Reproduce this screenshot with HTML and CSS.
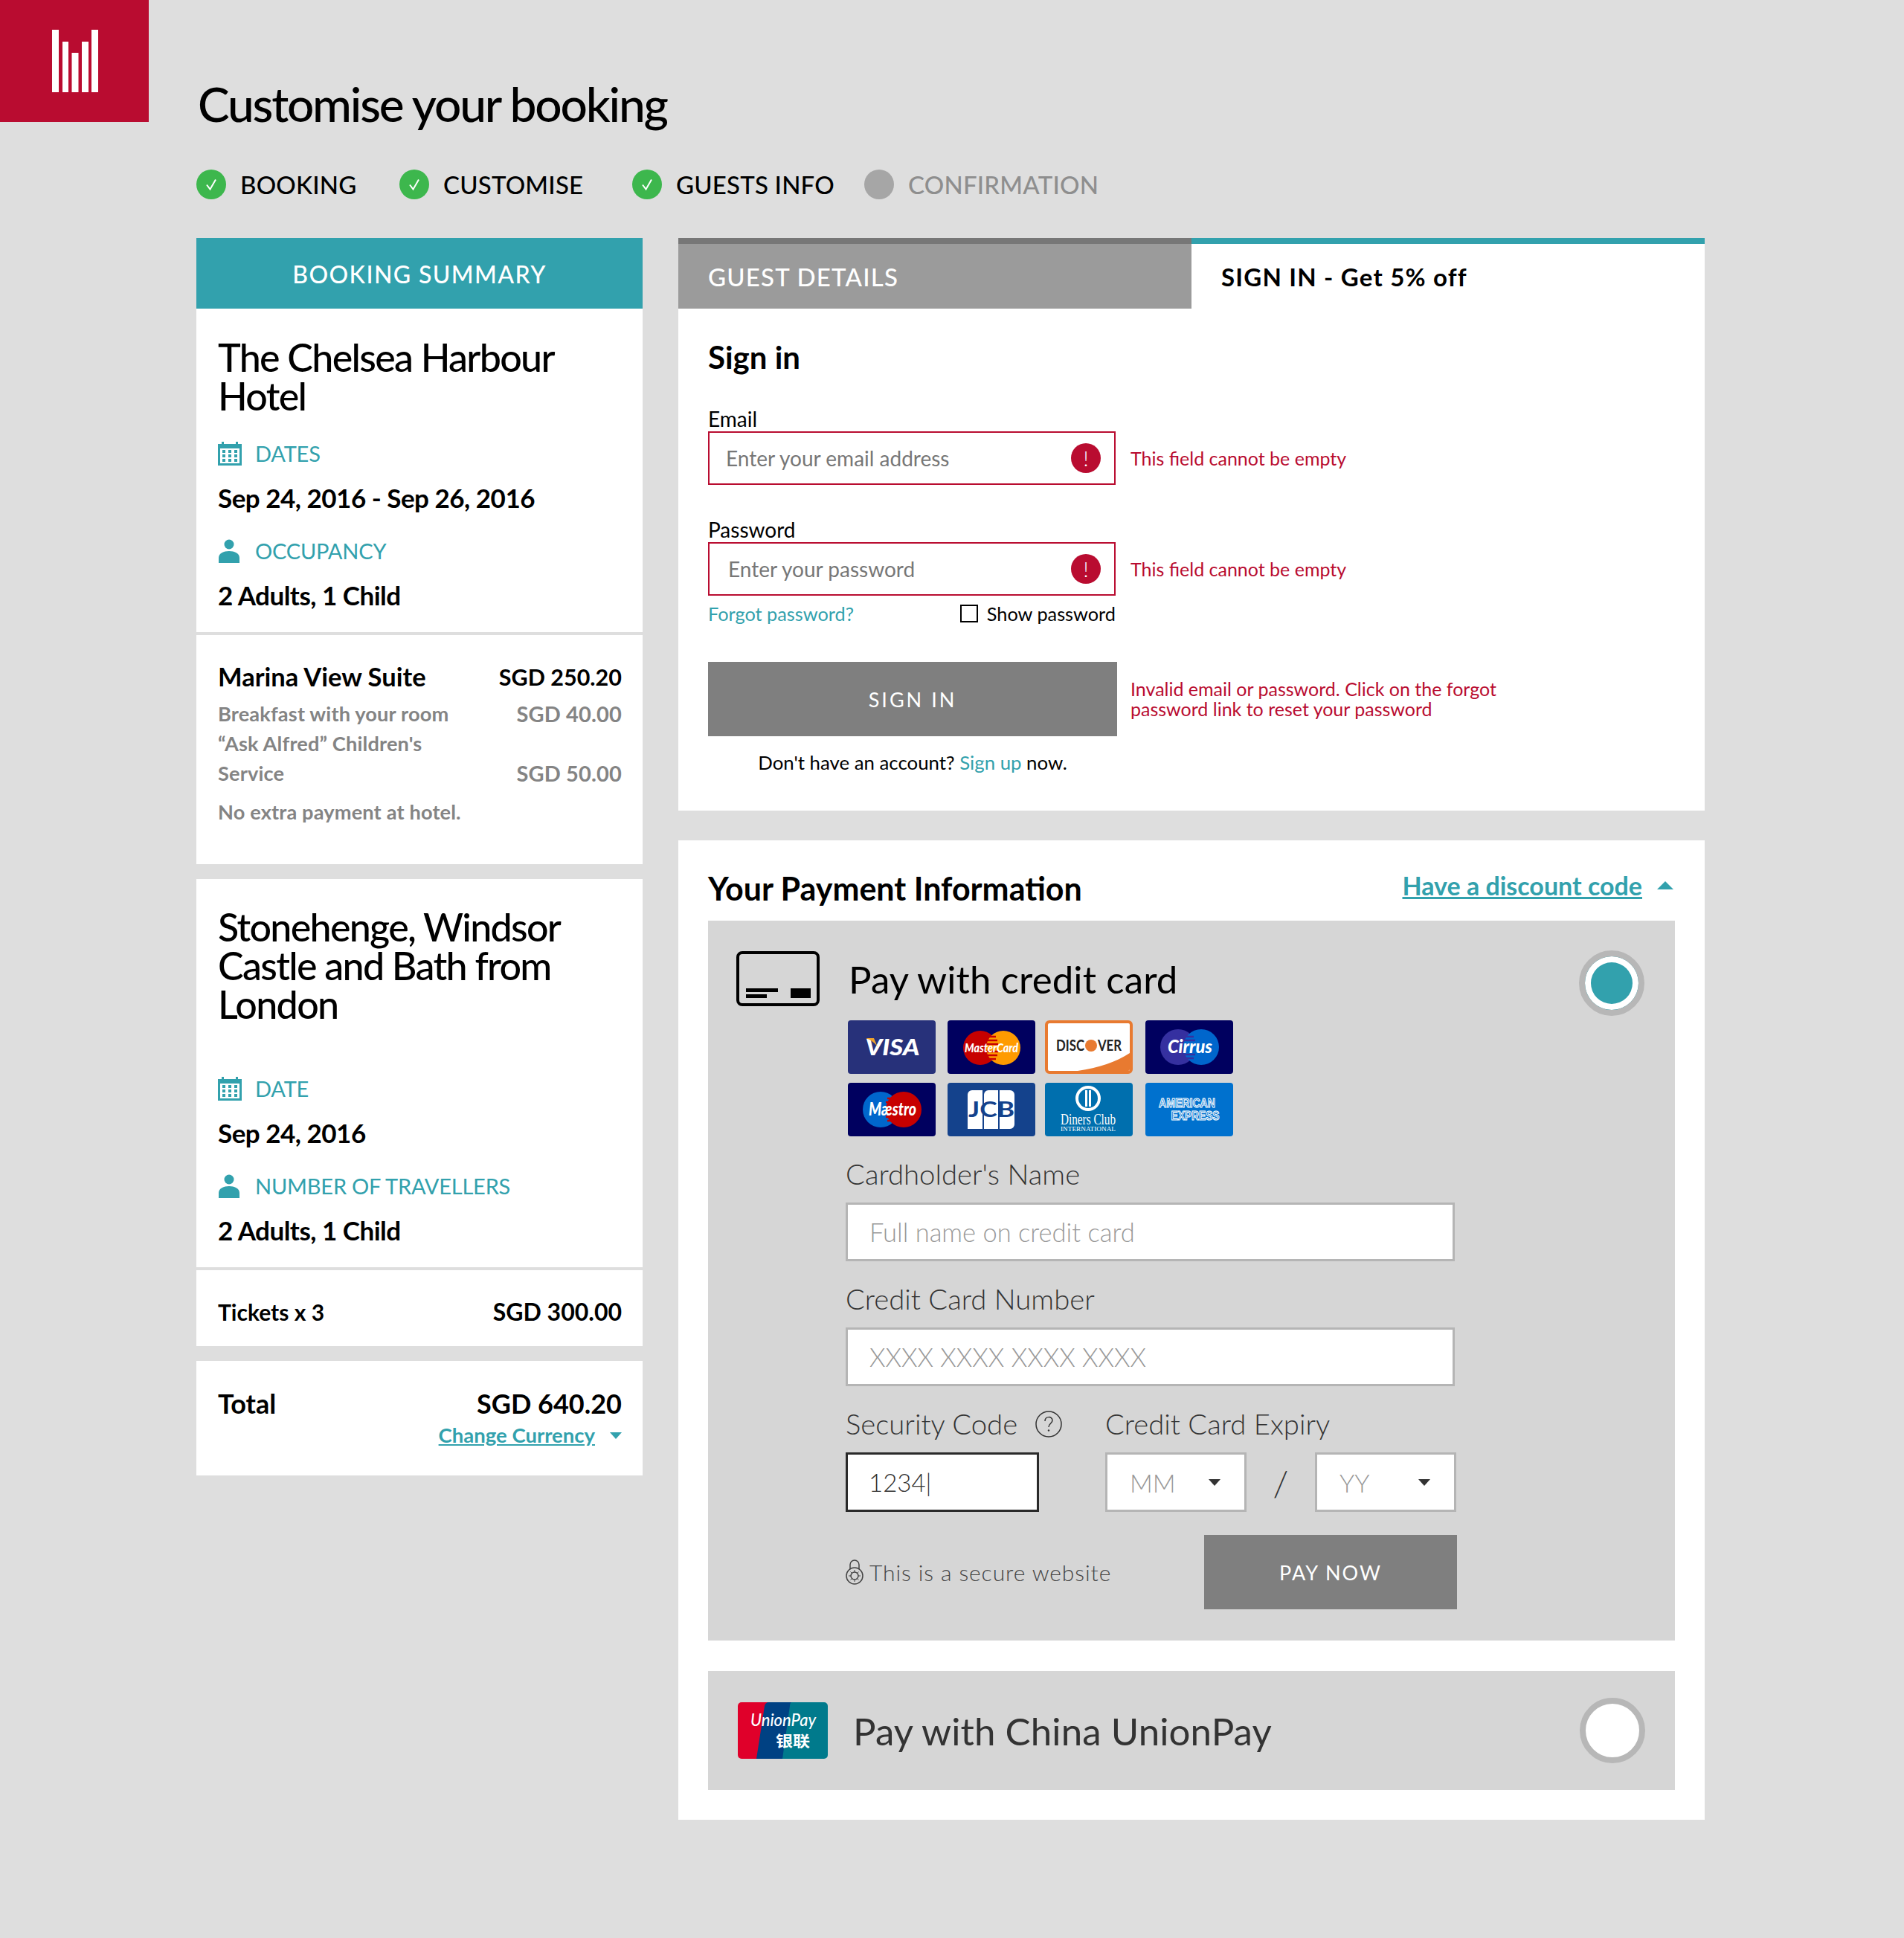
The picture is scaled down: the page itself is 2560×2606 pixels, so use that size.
FILE: index.html
```html
<!DOCTYPE html>
<html lang="en">
<head>
    <meta charset="UTF-8">
    <meta name="viewport" content="width=device-width, initial-scale=1.0">
    <title>Customise your booking</title>
    <link rel="stylesheet" href="styles.css">
</head>
<body>
    <header class="top">
        <div class="logo">
            <svg width="62" height="84" viewBox="0 0 62 84">
                <rect x="0" y="0" width="9" height="84" fill="#fff"/>
                <rect x="14" y="16" width="8" height="68" fill="#fff"/>
                <rect x="26.500" y="31" width="9" height="53" fill="#fff"/>
                <rect x="40" y="16" width="9" height="68" fill="#fff"/>
                <rect x="53" y="0" width="9" height="84" fill="#fff"/>
            </svg>
        </div>
        <h1>Customise your booking</h1>
    </header>

    <ul class="steps">
        <li class="step step-1"><span class="tick"><svg width="40" height="40" viewBox="0 0 40 40"><path d="M14 20.500l4.500 6L26 13.500" fill="none" stroke="#fff" stroke-width="2"/></svg></span>BOOKING</li>
        <li class="step step-2"><span class="tick"><svg width="40" height="40" viewBox="0 0 40 40"><path d="M14 20.500l4.500 6L26 13.500" fill="none" stroke="#fff" stroke-width="2"/></svg></span>CUSTOMISE</li>
        <li class="step step-3"><span class="tick"><svg width="40" height="40" viewBox="0 0 40 40"><path d="M14 20.500l4.500 6L26 13.500" fill="none" stroke="#fff" stroke-width="2"/></svg></span>GUESTS INFO</li>
        <li class="step step-off"><span class="tick"></span>CONFIRMATION</li>
    </ul>

    <main class="columns">
        <aside class="summary">
            <div class="summary-head">BOOKING SUMMARY</div>

            <section class="block block-info">
                <h2>The Chelsea Harbour Hotel</h2>
                <div class="meta meta-first">
                    <svg class="meta-icon" width="32" height="32" viewBox="0 0 32 32"><path d="M0 3h5V0h3v3h16V0h3v3h5v29H0zM3 9v20h26V9z" fill="#32a1ad"/><path d="M6 11h4v4H6zM14 11h4v4h-4zM22 11h4v4h-4zM6 17h4v4H6zM14 17h4v4h-4zM22 17h4v4h-4zM6 23h4v4H6zM14 23h4v4h-4zM22 23h4v4h-4z" fill="#32a1ad"/></svg>
                    DATES
                </div>
                <p class="value">Sep 24, 2016 - Sep 26, 2016</p>
                <div class="meta">
                    <svg class="meta-icon" width="32" height="32" viewBox="0 0 32 32"><circle cx="15" cy="7" r="6.500" fill="#32a1ad"/><path d="M1 32v-7c0-6 7-9 14-9s14 3 14 9v7z" fill="#32a1ad"/></svg>
                    OCCUPANCY
                </div>
                <p class="value">2 Adults, 1 Child</p>
            </section>

            <section class="block block-prices">
                <div class="price-row price-main"><span>Marina View Suite</span><span class="amount">SGD 250.20</span></div>
                <div class="price-row price-extra"><span>Breakfast with your room</span><span class="amount">SGD 40.00</span></div>
                <div class="price-row price-extra"><span class="price-wrap">“Ask Alfred” Children's Service</span><span class="amount">SGD 50.00</span></div>
                <p class="price-note">No extra payment at hotel.</p>
            </section>

            <section class="block block-tour">
                <h2>Stonehenge, Windsor Castle and Bath from London</h2>
                <div class="meta meta-tour">
                    <svg class="meta-icon" width="32" height="32" viewBox="0 0 32 32"><path d="M0 3h5V0h3v3h16V0h3v3h5v29H0zM3 9v20h26V9z" fill="#32a1ad"/><path d="M6 11h4v4H6zM14 11h4v4h-4zM22 11h4v4h-4zM6 17h4v4H6zM14 17h4v4h-4zM22 17h4v4h-4zM6 23h4v4H6zM14 23h4v4h-4zM22 23h4v4h-4z" fill="#32a1ad"/></svg>
                    DATE
                </div>
                <p class="value">Sep 24, 2016</p>
                <div class="meta">
                    <svg class="meta-icon" width="32" height="32" viewBox="0 0 32 32"><circle cx="15" cy="7" r="6.500" fill="#32a1ad"/><path d="M1 32v-7c0-6 7-9 14-9s14 3 14 9v7z" fill="#32a1ad"/></svg>
                    NUMBER OF TRAVELLERS
                </div>
                <p class="value">2 Adults, 1 Child</p>
            </section>

            <section class="block block-tickets">
                <div class="price-row price-tickets"><span>Tickets x 3</span><span class="amount">SGD 300.00</span></div>
            </section>

            <section class="block block-total">
                <div class="price-row price-total"><span>Total</span><span class="amount">SGD 640.20</span></div>
                <div class="currency"><a href="#">Change Currency</a><i class="caret caret-teal"></i></div>
            </section>
        </aside>

        <div class="content">
            <section class="signin-card">
                <div class="tabs">
                    <div class="tab tab-off">GUEST DETAILS</div>
                    <div class="tab tab-on">SIGN IN - Get 5% off</div>
                </div>
                <div class="signin-body">
                    <h3>Sign in</h3>
                    <label class="signin-label" for="email">Email</label>
                    <div class="signin-row">
                        <div class="bad-input">
                            <input id="email" type="text" placeholder="Enter your email address">
                            <span class="bang">!</span>
                        </div>
                        <span class="error">This field cannot be empty</span>
                    </div>
                    <label class="signin-label label-gap" for="password">Password</label>
                    <div class="signin-row">
                        <div class="bad-input">
                            <input id="password" class="input-pass" type="text" placeholder="Enter your password">
                            <span class="bang">!</span>
                        </div>
                        <span class="error">This field cannot be empty</span>
                    </div>
                    <div class="pass-tools">
                        <a href="#">Forgot password?</a>
                        <span class="show-pass"><i class="check"></i>Show password</span>
                    </div>
                    <div class="signin-row signin-submit">
                        <button type="button" class="btn btn-signin">SIGN IN</button>
                        <span class="error error-long">Invalid email or password. Click on the forgot password link to reset your password</span>
                    </div>
                    <p class="signup">Don't have an account? <a href="#">Sign up</a> now.</p>
                </div>
            </section>

            <section class="pay-card">
                <div class="pay-head">
                    <h3>Your Payment Information</h3>
                    <div class="discount"><a href="#">Have a discount code</a><i class="caret-up"></i></div>
                </div>

                <div class="panel panel-card">
                    <div class="panel-top">
                        <svg class="card-icon" width="112" height="74" viewBox="0 0 112 74">
                            <rect x="2" y="2" width="108" height="70" rx="6" fill="none" stroke="#000" stroke-width="4"/>
                            <path d="M13 50h43v5H13zM13 58h28v5H13zM73 50h27v13H73z" fill="#000"/>
                        </svg>
                        <h4>Pay with credit card</h4>
                        <span class="radio radio-on"></span>
                    </div>

                    <div class="pay-form">
                        <div class="brands">
                            <svg class="brand" viewBox="0 0 118 72"><rect width="118" height="72" rx="4" fill="#27317a"/><text class="brand-bold" x="60" y="47" font-size="31" text-anchor="middle" textLength="73" lengthAdjust="spacingAndGlyphs" fill="#fff">VISA</text><path d="M24 24h11l5 12c-3-5-9-10-16-12z" fill="#f0a32a"/></svg>
                            <svg class="brand" viewBox="0 0 118 72"><rect width="118" height="72" rx="4" fill="#00005f"/><circle cx="44" cy="37" r="23" fill="#c70000"/><circle cx="75" cy="37" r="23" fill="#ff9b00"/><path d="M54 22h11M52 27h15M51 32h17M51 42h17M52 47h15M54 52h11" stroke="#c70000" stroke-width="2.500"/><text class="brand-bold" x="59" y="43" font-size="17" text-anchor="middle" textLength="72" lengthAdjust="spacingAndGlyphs" fill="#fff">MasterCard</text></svg>
                            <svg class="brand" viewBox="0 0 118 72"><rect x="2" y="2" width="114" height="68" rx="4" fill="#fff" stroke="#e87a30" stroke-width="4"/><path d="M114 44v22a2 2 0 0 1-2 2H44c28-4 52-12 70-24z" fill="#e87a30"/><text class="brand-sans" x="15" y="41" font-size="20" textLength="38" lengthAdjust="spacingAndGlyphs" fill="#222">DISC</text><circle cx="62" cy="34" r="8" fill="#e87a30"/><text class="brand-sans" x="71" y="41" font-size="20" textLength="32" lengthAdjust="spacingAndGlyphs" fill="#222">VER</text></svg>
                            <svg class="brand" viewBox="0 0 118 72"><rect width="118" height="72" rx="4" fill="#00005f"/><circle cx="44" cy="36" r="24" fill="#3530a0"/><circle cx="75" cy="36" r="24" fill="#0066cc"/><path d="M53 22h12M51 27h16M51 46h16M53 51h12" stroke="#3530a0" stroke-width="2.500"/><text class="brand-bold" x="60" y="44" font-size="24" text-anchor="middle" textLength="60" lengthAdjust="spacingAndGlyphs" fill="#fff">Cirrus</text></svg>
                            <svg class="brand" viewBox="0 0 118 72"><rect width="118" height="72" rx="4" fill="#00005f"/><circle cx="44" cy="36" r="24" fill="#0066cc"/><circle cx="75" cy="36" r="24" fill="#c70000"/><path d="M53 21h13M51 26h17M51 46h17M53 51h13" stroke="#c70000" stroke-width="2.500"/><text class="brand-bold" x="60" y="44" font-size="24" text-anchor="middle" textLength="64" lengthAdjust="spacingAndGlyphs" fill="#fff">Mæstro</text></svg>
                            <svg class="brand" viewBox="0 0 118 72"><rect width="118" height="72" rx="4" fill="#14428c"/><path d="M27 16a6 6 0 0 1 6-6h14v52H27zM49 16a6 6 0 0 1 6-6h13v52H49zM70 10h14a6 6 0 0 1 6 6v40a6 6 0 0 1-6 6H70z" fill="#fff"/><text class="brand-sans" x="59" y="46" font-size="29" text-anchor="middle" textLength="62" lengthAdjust="spacingAndGlyphs" fill="#14428c">JCB</text></svg>
                            <svg class="brand" viewBox="0 0 118 72"><rect width="118" height="72" rx="4" fill="#006fae"/><circle cx="58" cy="21" r="17" fill="#fff"/><circle cx="58" cy="21" r="13" fill="#006fae"/><path d="M54 10h3v22h-3zM59 10h3v22h-3z" fill="#fff"/><text class="brand-serif" x="58" y="56" font-size="20" text-anchor="middle" textLength="74" lengthAdjust="spacingAndGlyphs" fill="#fff">Diners Club</text><text class="brand-serif" x="58" y="65" font-size="9" text-anchor="middle" textLength="74" lengthAdjust="spacingAndGlyphs" fill="#fff">INTERNATIONAL</text></svg>
                            <svg class="brand" viewBox="0 0 118 72"><rect width="118" height="72" rx="4" fill="#0071ce"/><text class="brand-amex" x="56" y="33" font-size="16.500" text-anchor="middle" textLength="76" lengthAdjust="spacingAndGlyphs">AMERICAN</text><text class="brand-amex" x="67" y="50" font-size="16.500" text-anchor="middle" textLength="65" lengthAdjust="spacingAndGlyphs">EXPRESS</text></svg>
                        </div>

                        <label class="pay-label" for="cardname">Cardholder's Name</label>
                        <input id="cardname" class="pay-input" type="text" placeholder="Full name on credit card">
                        <label class="pay-label" for="cardnum">Credit Card Number</label>
                        <input id="cardnum" class="pay-input" type="text" placeholder="XXXX XXXX XXXX XXXX">

                        <div class="code-row">
                            <div class="code-col">
                                <label class="pay-label" for="code">Security Code<svg class="help" width="36" height="36" viewBox="0 0 36 36"><circle cx="18" cy="18" r="17" fill="none" stroke="#333" stroke-width="1.500"/><path d="M13 14c0-7 10-7 10-1 0 4-5 4-5 9" fill="none" stroke="#333" stroke-width="1.500"/><circle cx="18" cy="26.500" r="1.200" fill="#333"/></svg></label>
                                <input id="code" class="pay-input code-input" type="text" value="1234|">
                            </div>
                            <div class="expiry-col">
                                <div class="pay-label">Credit Card Expiry</div>
                                <div class="expiry">
                                    <div class="select">MM<i class="caret caret-dark"></i></div>
                                    <span class="slash">/</span>
                                    <div class="select">YY<i class="caret caret-dark"></i></div>
                                </div>
                            </div>
                        </div>

                        <div class="pay-row">
                            <span class="secure">
                                <svg width="24" height="34" viewBox="0 0 24 34"><path d="M6 13V7a6 6 0 0 1 12 0v6" fill="none" stroke="#444" stroke-width="1.500"/><circle cx="12" cy="22" r="11" fill="none" stroke="#444" stroke-width="1.500"/><circle cx="12" cy="22" r="5" fill="none" stroke="#444" stroke-width="1.500"/><path d="M12 14v3M12 27v3M4 22h3M17 22h3M6.500 16.500l2 2M15.500 25.500l2 2M6.500 27.500l2-2M15.500 18.500l2-2" stroke="#444"/></svg>
                                This is a secure website
                            </span>
                            <button type="button" class="btn btn-pay">PAY NOW</button>
                        </div>
                    </div>
                </div>

                <div class="panel panel-union">
                    <svg class="union-logo" width="121" height="76" viewBox="0 0 121 76">
                        <path d="M5 0h40L32 76H5a5 5 0 0 1-5-5V5a5 5 0 0 1 5-5z" fill="#e0002a"/>
                        <path d="M43 0h46L78 76H25L36 5a6 6 0 0 1 7-5z" fill="#004183"/>
                        <path d="M80 0h36a5 5 0 0 1 5 5v66a5 5 0 0 1-5 5H60l10-71a6 6 0 0 1 10-5z" fill="#007a8c"/>
                        <text class="union-en" x="61" y="32" font-size="23" text-anchor="middle" textLength="88" lengthAdjust="spacingAndGlyphs" fill="#fff">UnionPay</text>
                        <text class="union-cn" x="74" y="60" font-size="20" text-anchor="middle" textLength="46" lengthAdjust="spacingAndGlyphs" fill="#fff">银联</text>
                    </svg>
                    <h4 class="union-title">Pay with China UnionPay</h4>
                    <span class="radio"></span>
                </div>
            </section>
        </div>
    </main>
</body>
</html>
```

FILE: styles.css
```css
* {
    box-sizing: border-box;
}
body {
    margin: 0;
    min-height: 2606px;
    background: #dedede;
    color: #000;
    font-family: Lato, 'Noto Sans', sans-serif;
}
h1, h2, h3, h4, p, ul {
    margin: 0;
    padding: 0;
}
a {
    color: #32a1ad;
    text-decoration: none;
}
.top {
    display: flex;
    height: 176px;
}
.logo {
    width: 200px;
    height: 164px;
    padding: 40px 0 0 70px;
    background: #b90c30;
}
.logo svg {
    display: block;
}
h1 {
    margin: 102px 0 0 66px;
    font-size: 64px;
    font-weight: 500;
    letter-spacing: -2.2px;
    line-height: 76px;
}
.steps {
    display: flex;
    margin: 52px 0 0 264px;
    list-style: none;
}
.step {
    display: flex;
    align-items: center;
    gap: 19px;
    height: 40px;
    font-size: 33px;
    font-weight: 500;
    letter-spacing: 0.2px;
}
.step-1 {
    width: 273px;
}
.step-2 {
    width: 313px;
}
.step-3 {
    width: 312px;
}
.step-off {
    color: #8e8e8e;
}
.tick {
    width: 40px;
    height: 40px;
    border-radius: 50%;
    background: #3db74d;
}
.tick svg {
    display: block;
}
.step-off .tick {
    background: #a6a6a6;
}
.columns {
    display: flex;
    gap: 48px;
    margin: 52px 0 0 264px;
}
.summary {
    width: 600px;
}
.summary-head {
    height: 95px;
    background: #32a1ad;
    color: #fff;
    font-size: 32px;
    font-weight: 500;
    letter-spacing: 1.4px;
    line-height: 97px;
    text-align: center;
}
.block {
    padding: 0 28px 0 29px;
    background: #fff;
}
.block h2 {
    font-size: 52px;
    font-weight: 500;
    letter-spacing: -1.700px;
    line-height: 52px;
}
.block-info {
    padding-top: 39px;
    padding-bottom: 31px;
}
.block-prices {
    margin-top: 4px;
    padding-top: 36px;
    padding-bottom: 50px;
}
.block-tour {
    margin-top: 20px;
    padding-top: 38px;
    padding-bottom: 31px;
}
.block-tickets {
    margin-top: 4px;
    padding-top: 36px;
    padding-bottom: 26px;
}
.block-total {
    margin-top: 20px;
    padding-top: 37px;
    padding-bottom: 36px;
}
.meta {
    display: flex;
    align-items: center;
    gap: 18px;
    height: 32px;
    margin-top: 37px;
    color: #32a1ad;
    font-size: 29px;
    letter-spacing: -0.2px;
    line-height: 32px;
}
.meta-first {
    margin-top: 36px;
}
.meta-tour {
    margin-top: 72px;
}
.meta-icon {
    flex: none;
}
.value {
    margin-top: 26px;
    padding-bottom: 2px;
    font-size: 35px;
    font-weight: 700;
    letter-spacing: -0.5px;
    line-height: 34px;
}
.price-row {
    display: flex;
    align-items: flex-end;
    justify-content: space-between;
    line-height: 40px;
}
.price-main {
    margin-bottom: 10px;
    font-size: 34.500px;
    font-weight: 700;
}
.price-main .amount {
    font-size: 30.500px;
}
.price-extra {
    color: #848484;
    font-size: 27.200px;
    font-weight: 700;
    letter-spacing: 0.15px;
}
.price-extra .amount {
    font-size: 29px;
}
.price-wrap {
    width: 340px;
}
.price-note {
    margin-top: 12px;
    color: #848484;
    font-size: 27.200px;
    font-weight: 700;
    letter-spacing: 0.15px;
    line-height: 40px;
}
.price-tickets {
    font-size: 30px;
    font-weight: 700;
}
.price-tickets .amount {
    font-size: 32px;
}
.price-total {
    font-size: 36px;
    font-weight: 700;
}
.currency {
    display: flex;
    align-items: center;
    justify-content: flex-end;
    gap: 20px;
    margin-top: 5px;
    font-size: 27.500px;
    font-weight: 700;
    line-height: 36px;
}
.currency a,
.discount a {
    text-decoration: underline;
}
.caret {
    width: 0;
    height: 0;
    border-top: 9px solid;
    border-right: 8px solid transparent;
    border-left: 8px solid transparent;
}
.caret-teal {
    border-top-color: #32a1ad;
}
.caret-dark {
    margin-left: auto;
    border-top-color: #333;
}
.content {
    width: 1380px;
}
.signin-card,
.pay-card {
    background: #fff;
}
.tabs {
    display: flex;
    height: 95px;
}
.tab {
    width: 50%;
    padding-left: 40px;
    font-size: 33px;
    font-weight: 500;
    letter-spacing: 1.2px;
    line-height: 89px;
}
.tab-off {
    border-top: 8px solid #777;
    background: #9b9b9b;
    color: #fff;
}
.tab-on {
    border-top: 8px solid #32a1ad;
    font-weight: 700;
}
.signin-body {
    padding: 41px 40px 47px;
}
.signin-body h3 {
    font-size: 42px;
    font-weight: 700;
    line-height: 48px;
}
.signin-label {
    display: block;
    margin-top: 44px;
    font-size: 28px;
    line-height: 30px;
    padding-bottom: 2px;
}
.label-gap {
    margin-top: 45px;
}
.signin-row {
    display: flex;
    align-items: center;
    gap: 20px;
}
.bad-input {
    display: flex;
    align-items: center;
    width: 548px;
    height: 72px;
    padding-right: 18px;
    border: 2px solid #b90c30;
}
.bad-input input {
    width: 100%;
    padding: 0 0 0 22px;
    border: 0;
    outline: none;
    color: #666;
    font-family: inherit;
    font-size: 28px;
}
.bad-input input::placeholder {
    color: #777;
    opacity: 1;
}
.bad-input .input-pass {
    padding-left: 25px;
}
.bang {
    flex: none;
    width: 40px;
    height: 40px;
    border-radius: 50%;
    background: #b90c30;
    color: #fff;
    font-size: 28px;
    font-weight: 300;
    line-height: 40px;
    text-align: center;
}
.error {
    color: #b90c30;
    font-size: 25px;
}
.error-long {
    width: 520px;
    margin-left: -2px;
    line-height: 27px;
}
.pass-tools {
    display: flex;
    align-items: center;
    justify-content: space-between;
    width: 548px;
    height: 48px;
    font-size: 25.300px;
}
.show-pass {
    display: flex;
    align-items: center;
    gap: 12px;
}
.check {
    width: 24px;
    height: 24px;
    border: 2.500px solid #000;
}
.signin-submit {
    margin-top: 41px;
}
.btn {
    border: 0;
    background: #7f7f7f;
    color: #fff;
    font-family: inherit;
    font-size: 27px;
    letter-spacing: 3px;
}
.btn-signin {
    flex: none;
    width: 550px;
    height: 100px;
}
.signup {
    width: 550px;
    margin-top: 17px;
    font-size: 25.800px;
    line-height: 36px;
    text-align: center;
}
.pay-card {
    margin-top: 40px;
    padding: 43px 40px 40px;
}
.pay-head {
    display: flex;
    align-items: center;
    justify-content: space-between;
    height: 44px;
}
.pay-head h3 {
    margin-top: -2px;
    font-size: 43px;
    font-weight: 700;
}
.discount {
    display: flex;
    align-items: center;
    gap: 20px;
    margin-right: 2px;
    margin-top: -9px;
    font-size: 34px;
    font-weight: 700;
}
.caret-up {
    width: 0;
    height: 0;
    border-right: 11px solid transparent;
    border-bottom: 11px solid #32a1ad;
    border-left: 11px solid transparent;
}
.panel {
    background: #d6d6d6;
}
.panel-card {
    margin-top: 21px;
    padding: 40px 41px 42px 38px;
}
.panel-top {
    display: flex;
    align-items: center;
    height: 88px;
}
.card-icon {
    flex: none;
    align-self: flex-start;
    margin: 1px 39px 0 0;
}
.panel h4 {
    color: #000;
    font-size: 51px;
    font-weight: 400;
    letter-spacing: 0.1px;
}
.panel-top h4 {
    padding-bottom: 12px;
}
.radio {
    flex: none;
    width: 88px;
    height: 88px;
    margin-left: auto;
    border: 8px solid #b7b7b7;
    border-radius: 50%;
    background: #fff;
}
.radio-on {
    background: #32a1ad;
    box-shadow: inset 0 0 0 8px #fff;
}
.pay-form {
    padding-left: 147px;
}
.brands {
    display: grid;
    grid-template-columns: 134px 131px 135px 118px;
    row-gap: 12px;
    margin: 6px 0 0 3px;
}
.brand {
    display: block;
    width: 118px;
    height: 72px;
}
.brand-bold {
    font-family: Lato, sans-serif;
    font-style: italic;
    font-weight: 900;
}
.brand-sans {
    font-family: Lato, sans-serif;
    font-weight: 700;
}
.brand-serif {
    font-family: 'Liberation Serif', serif;
}
.brand-amex {
    fill: #0071ce;
    stroke: #fff;
    stroke-width: 1.100px;
    font-family: 'Liberation Sans', sans-serif;
    font-weight: 700;
}
.union-en {
    font-family: Lato, sans-serif;
    font-style: italic;
    font-weight: 500;
}
.union-cn {
    font-family: 'Noto Sans CJK SC', sans-serif;
    font-weight: 700;
}
.pay-label {
    display: block;
    height: 44px;
    margin: 28px 0 17px;
    color: #333;
    font-size: 38.300px;
    font-weight: 300;
    line-height: 44px;
    white-space: nowrap;
}
.pay-input {
    display: block;
    width: 819px;
    height: 79px;
    padding: 0 0 0 29px;
    border: 3px solid #b5b5b5;
    border-radius: 0;
    outline: none;
    color: #333;
    font-family: inherit;
    font-size: 34.500px;
    font-weight: 300;
}
.pay-input::placeholder {
    color: #999;
    opacity: 1;
}
.code-row {
    display: flex;
}
.code-col {
    width: 349px;
}
.code-input {
    width: 260px;
    height: 80px;
    border-color: #2a2a2a;
    padding-left: 28px;
    color: #333;
    font-size: 33px;
}
.help {
    margin-left: 24px;
    vertical-align: -4px;
}
.expiry {
    display: flex;
    align-items: center;
}
.select {
    display: flex;
    align-items: center;
    width: 190px;
    height: 80px;
    padding: 0 32px 0 30px;
    border: 3px solid #b5b5b5;
    background: #fff;
    color: #999;
    font-size: 34px;
    font-weight: 300;
}
.slash {
    width: 92px;
    color: #333;
    font-size: 48px;
    font-weight: 300;
    text-align: center;
}
.pay-row {
    display: flex;
    align-items: center;
    justify-content: space-between;
    width: 822px;
    margin-top: 31px;
}
.secure {
    display: flex;
    align-items: center;
    gap: 8px;
    color: #444;
    font-size: 30px;
    font-weight: 300;
    letter-spacing: 0.9px;
}
.btn-pay {
    width: 340px;
    height: 100px;
    letter-spacing: 2px;
}
.panel-union {
    display: flex;
    align-items: center;
    height: 160px;
    margin-top: 41px;
    padding: 0 40px;
}
.union-logo {
    flex: none;
    margin-right: 34px;
}
.panel .union-title {
    color: #333;
}
```
